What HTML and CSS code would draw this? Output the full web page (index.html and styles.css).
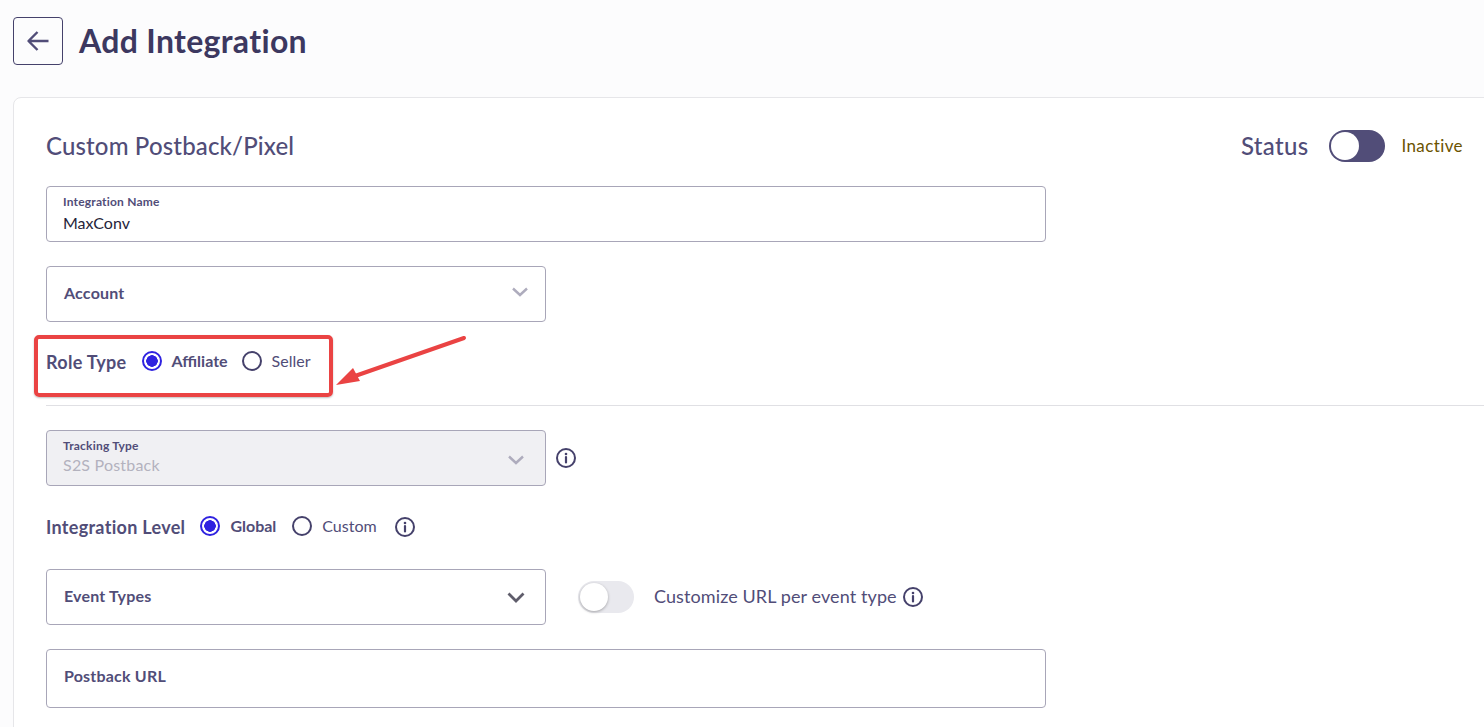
FILE: index.html
```html
<!DOCTYPE html>
<html>
<head>
    <title>Add Integration</title>
    <meta charset="utf-8">
    <link rel="stylesheet" href="styles.css">
</head>
<body>
    <header class="page-header">
        <button class="back-button" aria-label="Back">
            <svg width="24" height="24" viewBox="0 0 24 24" fill="none" stroke="#514d78" stroke-width="2.400" stroke-linejoin="round"><path d="M22.500 12H2.500M11.500 3L2.500 12L11.500 21"/></svg>
        </button>
        <h1>Add Integration</h1>
    </header>

    <main class="card">
        <div class="card-top">
            <h2>Custom Postback/Pixel</h2>
            <div class="status">
                <span class="status-label">Status</span>
                <span class="switch switch-dark"><span class="knob"></span></span>
                <span class="status-value">Inactive</span>
            </div>
        </div>

        <div class="field field-wide name-field">
            <label>Integration Name</label>
            <div class="value">MaxConv</div>
        </div>

        <div class="field select-field account-field">
            <span class="select-label">Account</span>
            <svg class="chevron" width="16" height="10" viewBox="0 0 16 10" fill="none" stroke="#aeacbd" stroke-width="2.400"><path d="M1 1.500L8 8L15 1.500"/></svg>
        </div>

        <div class="radio-row role-row">
            <span class="row-label">Role Type</span>
            <span class="radio radio-on"></span>
            <span class="radio-text radio-text-on">Affiliate</span>
            <span class="radio"></span>
            <span class="radio-text">Seller</span>
        </div>

        <hr class="divider">

        <div class="tracking-row">
            <div class="field field-disabled">
                <label>Tracking Type</label>
                <div class="value">S2S Postback</div>
                <svg class="chevron chevron-low" width="16" height="10" viewBox="0 0 16 10" fill="none" stroke="#aeacbd" stroke-width="2.400"><path d="M1 1.500L8 8L15 1.500"/></svg>
            </div>
            <svg class="info" width="22" height="22" viewBox="0 0 22 22"><use href="#info-icon"/></svg>
        </div>

        <div class="radio-row level-row">
            <span class="row-label">Integration Level</span>
            <span class="radio radio-on"></span>
            <span class="radio-text radio-text-on">Global</span>
            <span class="radio"></span>
            <span class="radio-text">Custom</span>
            <svg class="info level-info" width="22" height="22" viewBox="0 0 22 22"><use href="#info-icon"/></svg>
        </div>

        <div class="event-row">
            <div class="field select-field">
                <span class="select-label">Event Types</span>
                <svg class="chevron chevron-dark" width="18" height="11" viewBox="0 0 18 11" fill="none" stroke="#5f5d6b" stroke-width="2.800"><path d="M1.500 1.500L9 9L16.500 1.500"/></svg>
            </div>
            <span class="switch switch-light"><span class="knob"></span></span>
            <span class="customize-text">Customize URL per event type</span>
            <svg class="info" width="22" height="22" viewBox="0 0 22 22"><use href="#info-icon"/></svg>
        </div>

        <div class="field field-wide select-field postback-field">
            <span class="select-label">Postback URL</span>
        </div>
    </main>

    <!-- annotation drawn on top of the screenshot -->
    <div class="callout"></div>
    <svg class="callout-arrow" width="150" height="70" viewBox="0 0 150 70">
        <path d="M129 3L20 41" stroke="#ea4343" stroke-width="4" stroke-linecap="round" fill="none"/>
        <path d="M1 50L18 33L25 46Z" fill="#ea4343"/>
    </svg>

    <svg width="0" height="0" class="defs">
        <symbol id="info-icon" viewBox="0 0 22 22">
            <circle cx="11" cy="11" r="9" fill="none" stroke="#45416b" stroke-width="2"/>
            <circle cx="11" cy="7" r="1.300" fill="#45416b"/>
            <path d="M11 10V15.500" stroke="#45416b" stroke-width="2.200" stroke-linecap="round"/>
        </symbol>
    </svg>
</body>
</html>
```

FILE: styles.css
```css
* {
    box-sizing: border-box;
}
html, body {
    height: 727px;
    overflow: hidden;
}
body {
    margin: 0;
    background-color: #fcfcfd;
    font-family: Lato, "Open Sans", sans-serif;
    color: #514d78;
    position: relative;
}
.defs {
    position: absolute;
}
.page-header {
    display: flex;
    align-items: center;
    gap: 16px;
    padding: 17px 13px 0 13px;
}
.back-button {
    width: 50px;
    height: 48px;
    display: flex;
    align-items: center;
    justify-content: center;
    padding: 0;
    background: none;
    border: 1px solid #45416b;
    border-radius: 4px;
}
h1 {
    margin: 0;
    font-size: 32px;
    line-height: 48px;
    font-weight: 700;
    letter-spacing: 0.33px;
    color: #3c3860;
}
.card {
    width: 1500px;
    height: 660px;
    margin: 32px 0 0 13px;
    padding: 0 0 0 32px;
    background: white;
    border: 1px solid #e6e6e9;
    border-radius: 8px;
}
.card-top {
    height: 88px;
    width: 1417px;
    display: flex;
    align-items: center;
    justify-content: space-between;
    padding-top: 7px;
}
h2 {
    margin: 0;
    font-size: 24px;
    font-weight: 500;
    letter-spacing: 0.15px;
    color: #514d78;
}
.status {
    display: flex;
    align-items: center;
}
.status-label {
    font-size: 24px;
    font-weight: 500;
    letter-spacing: 0.3px;
    margin-right: 21px;
}
.status-value {
    font-size: 17px;
    letter-spacing: 0.4px;
    color: #6b5300;
    margin-left: 16px;
}
.switch {
    display: block;
    position: relative;
    width: 56px;
    height: 32px;
    border-radius: 16px;
}
.switch-dark {
    background: #514d78;
}
.switch-light {
    background: #e9e9ee;
}
.knob {
    position: absolute;
    top: 2px;
    left: 2px;
    width: 28px;
    height: 28px;
    border-radius: 50%;
    background: white;
}
.switch-light .knob {
    box-shadow: 0 1px 3px rgba(0, 0, 0, 0.3);
}
.field {
    position: relative;
    width: 500px;
    height: 56px;
    border: 1px solid #a8a6b8;
    border-radius: 4px;
    background: white;
    padding: 8px 16px 0 16px;
    flex-shrink: 0;
}
.field-wide {
    width: 1000px;
}
.field label {
    display: block;
    font-size: 12px;
    line-height: 14px;
    font-weight: 700;
    letter-spacing: 0.2px;
}
.value {
    font-size: 16px;
    line-height: 22px;
    margin-top: 3px;
    color: #26243a;
}
.select-field {
    display: flex;
    align-items: center;
    justify-content: space-between;
    padding: 0 17px 4px 17px;
}
.select-label {
    font-size: 16px;
    font-weight: 700;
    letter-spacing: 0.2px;
}
.chevron {
    margin-top: -1px;
}
.chevron-dark {
    margin-top: 5px;
    margin-right: 3px;
}
.chevron-low {
    position: absolute;
    right: 21px;
    top: 24px;
    margin: 0;
}
.account-field {
    margin-top: 24px;
}
.radio-row {
    display: flex;
    align-items: center;
    height: 22px;
}
.role-row {
    margin-top: 29px;
}
.row-label {
    font-size: 18px;
    font-weight: 700;
    letter-spacing: 0.3px;
    margin-right: 15px;
}
.radio {
    width: 20px;
    height: 20px;
    margin-top: -3px;
    border: 2px solid #45416b;
    border-radius: 50%;
    flex-shrink: 0;
}
.radio-on {
    border-color: #2f22e0;
    background: radial-gradient(circle, #2f22e0 0, #2f22e0 5.500px, white 6px);
}
.radio-text {
    font-size: 16px;
    margin: -3px 15px 0 10px;
}
.radio-text-on {
    font-weight: 700;
}
.role-row .radio-text-on {
    margin-right: 14px;
}
.level-row .radio-text {
    margin-top: -4px;
}
.level-row .radio-text-on {
    margin-right: 16px;
}
.divider {
    margin: 32px 0 0 0;
    border: 0;
    border-top: 1px solid #e0e0e4;
}
.tracking-row {
    display: flex;
    align-items: center;
    gap: 9px;
    margin-top: 24px;
}
.field-disabled {
    background: #f0f0f3;
}
.field-disabled .value {
    margin-top: 1px;
    letter-spacing: 0.2px;
    color: #b3b2be;
}
.info {
    flex-shrink: 0;
}
.level-row {
    margin-top: 30px;
}
.level-info {
    margin-left: 2px;
}
.event-row {
    display: flex;
    align-items: center;
    margin-top: 31px;
}
.event-row .switch {
    margin-left: 32px;
}
.customize-text {
    font-size: 18px;
    letter-spacing: 0.1px;
    margin: -2px 5px 0 20px;
}
.postback-field {
    height: 59px;
    margin-top: 24px;
    padding-bottom: 6px;
}
.callout {
    position: absolute;
    left: 34px;
    top: 335px;
    width: 299px;
    height: 62px;
    border: 4px solid #ea4343;
    border-radius: 5px;
    box-shadow: 0 1px 2px rgba(0, 0, 0, 0.25);
}
.callout-arrow {
    position: absolute;
    left: 335px;
    top: 335px;
}
```
